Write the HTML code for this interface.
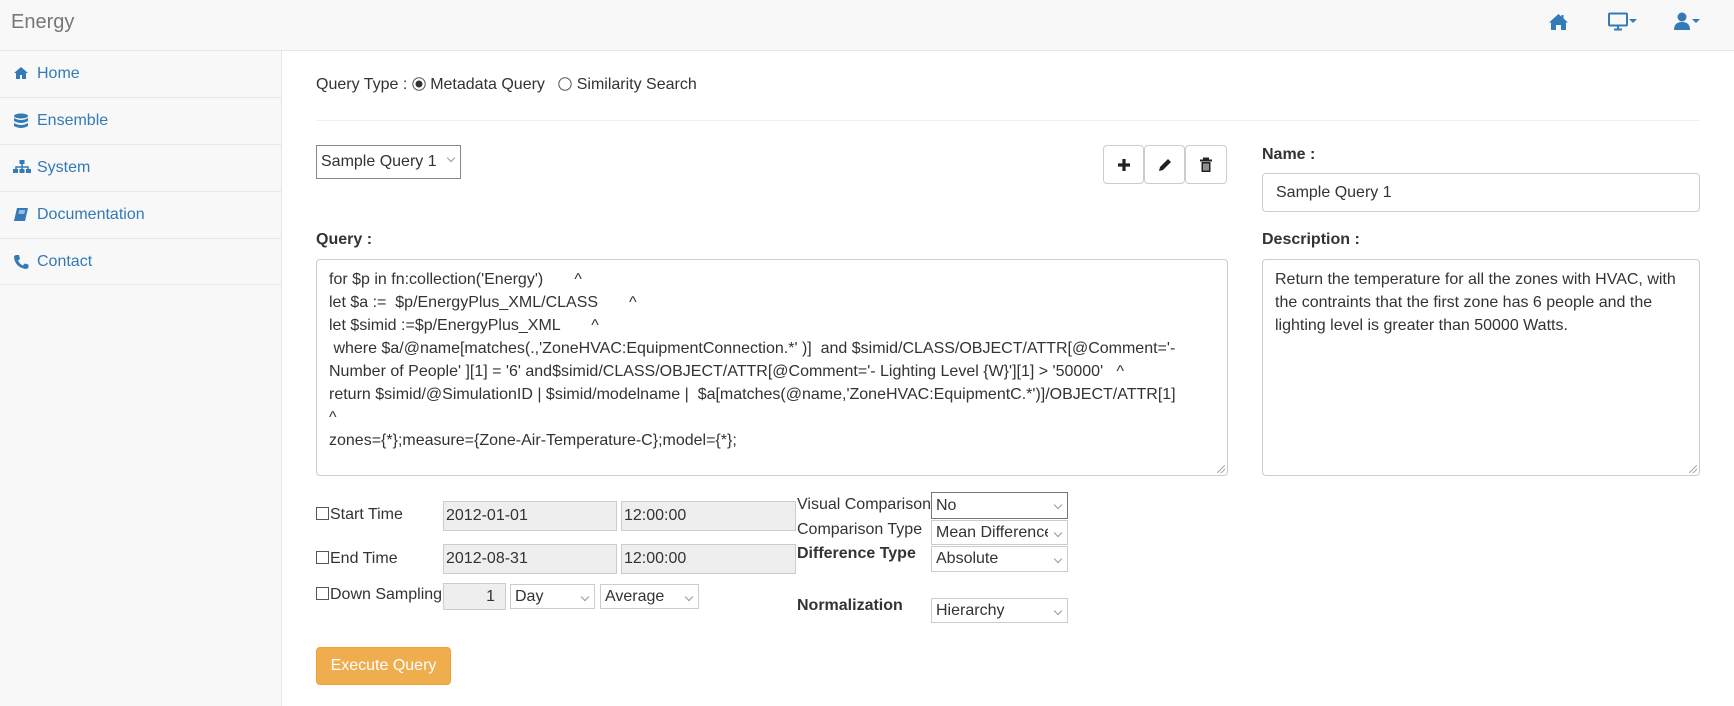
<!DOCTYPE html>
<html><head><meta charset="utf-8"><style>
*{box-sizing:border-box;margin:0;padding:0}
body{width:1734px;height:706px;overflow:hidden;background:#fff;font-family:"Liberation Sans",Arial,sans-serif;font-size:16px;color:#333;position:relative}
.a{position:absolute}
.nav{left:0;top:0;width:1734px;height:51px;background:#f8f8f8;border-bottom:1px solid #e7e7e7}
.side{left:0;top:51px;width:282px;height:655px;background:#f8f8f8;border-right:1px solid #e7e7e7}
.si{position:absolute;left:0;width:282px;height:47px;border-bottom:1px solid #e7e7e7;color:#337ab7;font-size:16px;line-height:46px;padding-left:37px}
.si svg{position:absolute;left:13px;top:15px}
.box{border:1px solid #ccc;border-radius:4px;background:#fff}
.ro{background:#eee;border:1px solid #ccc;font-size:16px;line-height:28px;padding-left:2px;color:#333}
.sel{border:1px solid #ccc;background:#fff;font-size:16px;padding-left:4px;color:#333}
.sel:after{content:"";position:absolute;right:6px;top:9px;width:5px;height:5px;border-right:1px solid #999;border-bottom:1px solid #999;transform:rotate(45deg)}
.cb{display:inline-block;width:13px;height:13px;border:1px solid #555;vertical-align:-1px;margin-right:1px;background:#fff}
.btn{border:1px solid #ccc;border-radius:4px;background:#fff;width:41px;height:39px}
.btn svg{position:absolute;left:12px;top:11px}
.ta{font-size:16px;line-height:23px;padding:8px 12px;white-space:pre}
.grip{position:absolute;right:2px;bottom:2px;width:8px;height:8px;background:linear-gradient(135deg,transparent 45%,#aaa 45%,#aaa 55%,transparent 55%,transparent 70%,#aaa 70%,#aaa 80%,transparent 80%)}
</style></head><body>
<div class="a nav"></div>
<div class="a" style="left:11px;top:11px;font-size:20px;color:#777">Energy</div>
<svg class="a" style="left:1548px;top:13px" width="21" height="18" viewBox="0 0 21 18"><path d="M10.5 1 L1 9.5 L3 9.5 L3 17 L8 17 L8 12 L13 12 L13 17 L18 17 L18 9.5 L20 9.5 L15.5 5.5 L15.5 2 L13.5 2 L13.5 3.7 Z" fill="#337ab7"/></svg>
<svg class="a" style="left:1608px;top:12px" width="30" height="20" viewBox="0 0 30 20"><rect x="1" y="1.5" width="18" height="12" rx="1" fill="none" stroke="#337ab7" stroke-width="2"/><path d="M10 14v3M6 17.5h8" stroke="#337ab7" stroke-width="2"/><path d="M21 7h8l-4 4z" fill="#337ab7"/></svg>
<svg class="a" style="left:1673px;top:12px" width="30" height="20" viewBox="0 0 30 20"><circle cx="9" cy="5" r="4.5" fill="#337ab7"/><path d="M1 18 Q1 10 9 10 Q17 10 17 18 Z" fill="#337ab7"/><path d="M19 7h8l-4 4z" fill="#337ab7"/></svg>

<div class="a side"></div>
<div class="si" style="top:51px;height:47px"><svg width="16" height="14" viewBox="0 0 16 14"><path d="M8 1L1 7h2v6h4V9h2v4h4V7h2z" fill="#337ab7"/></svg>Home</div>
<div class="si" style="top:98px"><svg width="16" height="16" viewBox="0 0 16 16"><ellipse cx="8" cy="3" rx="7" ry="2.5" fill="#337ab7"/><path d="M1 5q7 4 14 0v3q-7 4-14 0zM1 10q7 4 14 0v3q-7 4-14 0z" fill="#337ab7"/></svg>Ensemble</div>
<div class="si" style="top:145px"><svg width="18" height="16" viewBox="0 0 18 16"><rect x="6.5" y="0" width="5" height="4" fill="#337ab7"/><path d="M9 4v3M3 9V7h12v2M9 7v2" stroke="#337ab7" stroke-width="1.5" fill="none"/><rect x="0" y="9" width="5" height="4" fill="#337ab7"/><rect x="6.5" y="9" width="5" height="4" fill="#337ab7"/><rect x="13" y="9" width="5" height="4" fill="#337ab7"/></svg>System</div>
<div class="si" style="top:192px"><svg width="16" height="16" viewBox="0 0 16 16"><path d="M4 1h11l-3 13H1z" fill="#337ab7"/><path d="M6 4h6M5.5 6h6" stroke="#fff" stroke-width="1"/></svg>Documentation</div>
<div class="si" style="top:239px;height:46px"><svg width="16" height="16" viewBox="0 0 16 16"><path d="M3 1l3 0 1 4-2 1.5q1.5 3.5 5 5l1.5-2 4 1v3q-1 1.5-3 1.5Q2 13 1 3q0-1.5 2-2z" fill="#337ab7"/></svg>Contact</div>

<div class="a" style="left:316px;top:76px;font-size:16px">Query Type : <svg width="14" height="14" viewBox="0 0 14 14" style="vertical-align:-2px"><circle cx="7" cy="7" r="6.2" fill="#fff" stroke="#555"/><circle cx="7" cy="7" r="3.5" fill="#333"/></svg> Metadata Query &nbsp; <svg width="14" height="14" viewBox="0 0 14 14" style="vertical-align:-2px"><circle cx="7" cy="7" r="6.2" fill="#fff" stroke="#555"/></svg> Similarity Search</div>
<div class="a" style="left:316px;top:120px;width:1384px;height:1px;background:#eee"></div>

<div class="a sel" style="left:316px;top:145px;width:145px;height:34px;line-height:32px;border-color:#888">Sample Query 1</div>
<div class="a btn" style="left:1103px;top:145px"><svg width="16" height="16" viewBox="0 0 16 16"><path d="M8 2v12M2 8h12" stroke="#222" stroke-width="3.2"/></svg></div>
<div class="a btn" style="left:1144px;top:145px"><svg width="16" height="16" viewBox="0 0 16 16"><path d="M11 2l3 3-8 8-4 1 1-4z" fill="#222"/></svg></div>
<div class="a btn" style="left:1185px;top:145px;width:42px"><svg width="16" height="16" viewBox="0 0 16 16"><path d="M5 1.5h6M2 3.5h12" stroke="#222" stroke-width="2"/><path d="M3.5 5h9v10h-9z" fill="#222"/><path d="M6 6.5v7M8 6.5v7M10 6.5v7" stroke="#fff" stroke-width="1"/></svg></div>

<div class="a" style="left:1262px;top:146px;font-weight:bold">Name :</div>
<div class="a box" style="left:1262px;top:173px;width:438px;height:39px;padding:0 13px;line-height:37px">Sample Query 1</div>

<div class="a" style="left:316px;top:231px;font-weight:bold">Query :</div>
<div class="a" style="left:1262px;top:231px;font-weight:bold">Description :</div>
<div class="a box ta" style="left:316px;top:259px;width:912px;height:217px">for $p in fn:collection('Energy')       ^
let $a :=  $p/EnergyPlus_XML/CLASS       ^
let $simid :=$p/EnergyPlus_XML       ^
 where $a/@name[matches(.,'ZoneHVAC:EquipmentConnection.*' )]  and $simid/CLASS/OBJECT/ATTR[@Comment='-
Number of People' ][1] = '6' and$simid/CLASS/OBJECT/ATTR[@Comment='- Lighting Level {W}'][1] &gt; '50000'   ^
return $simid/@SimulationID | $simid/modelname |  $a[matches(@name,'ZoneHVAC:EquipmentC.*')]/OBJECT/ATTR[1]
^
zones={*};measure={Zone-Air-Temperature-C};model={*};<div class="grip"></div></div>
<div class="a box ta" style="left:1262px;top:259px;width:438px;height:217px;white-space:normal">Return the temperature for all the zones with HVAC, with the contraints that the first zone has 6 people and the lighting level is greater than 50000 Watts.<div class="grip"></div></div>

<div class="a" style="left:316px;top:506px"><span class="cb"></span>Start Time</div>
<div class="a" style="left:316px;top:550px"><span class="cb"></span>End Time</div>
<div class="a" style="left:316px;top:586px"><span class="cb"></span>Down Sampling</div>
<div class="a ro" style="left:443px;top:501px;width:174px;height:30px">2012-01-01</div>
<div class="a ro" style="left:621px;top:501px;width:175px;height:30px">12:00:00</div>
<div class="a ro" style="left:443px;top:544px;width:174px;height:30px">2012-08-31</div>
<div class="a ro" style="left:621px;top:544px;width:175px;height:30px">12:00:00</div>
<div class="a ro" style="left:443px;top:583px;width:63px;height:27px;line-height:25px;text-align:right;padding-right:10px">1</div>
<div class="a sel" style="left:510px;top:584px;width:85px;height:25px;line-height:23px">Day</div>
<div class="a sel" style="left:600px;top:584px;width:99px;height:25px;line-height:23px">Average</div>

<div class="a" style="left:797px;top:496px">Visual Comparison</div>
<div class="a sel" style="left:931px;top:492px;width:137px;height:27px;line-height:25px;border-color:#777">No</div>
<div class="a" style="left:797px;top:521px">Comparison Type</div>
<div class="a sel" style="left:931px;top:520px;width:137px;height:25px;line-height:23px;overflow:hidden;white-space:nowrap"><span style="display:inline-block;width:112px;overflow:hidden">Mean Difference</span></div>
<div class="a" style="left:797px;top:545px;font-weight:bold">Difference Type</div>
<div class="a sel" style="left:931px;top:546px;width:137px;height:26px;line-height:24px">Absolute</div>
<div class="a" style="left:797px;top:597px;font-weight:bold">Normalization</div>
<div class="a sel" style="left:931px;top:598px;width:137px;height:25px;line-height:23px">Hierarchy</div>

<div class="a" style="left:316px;top:647px;width:135px;height:38px;background:#f0ad4e;border:1px solid #eea236;border-radius:4px;color:#fff;line-height:36px;text-align:center">Execute Query</div>
</body></html>
